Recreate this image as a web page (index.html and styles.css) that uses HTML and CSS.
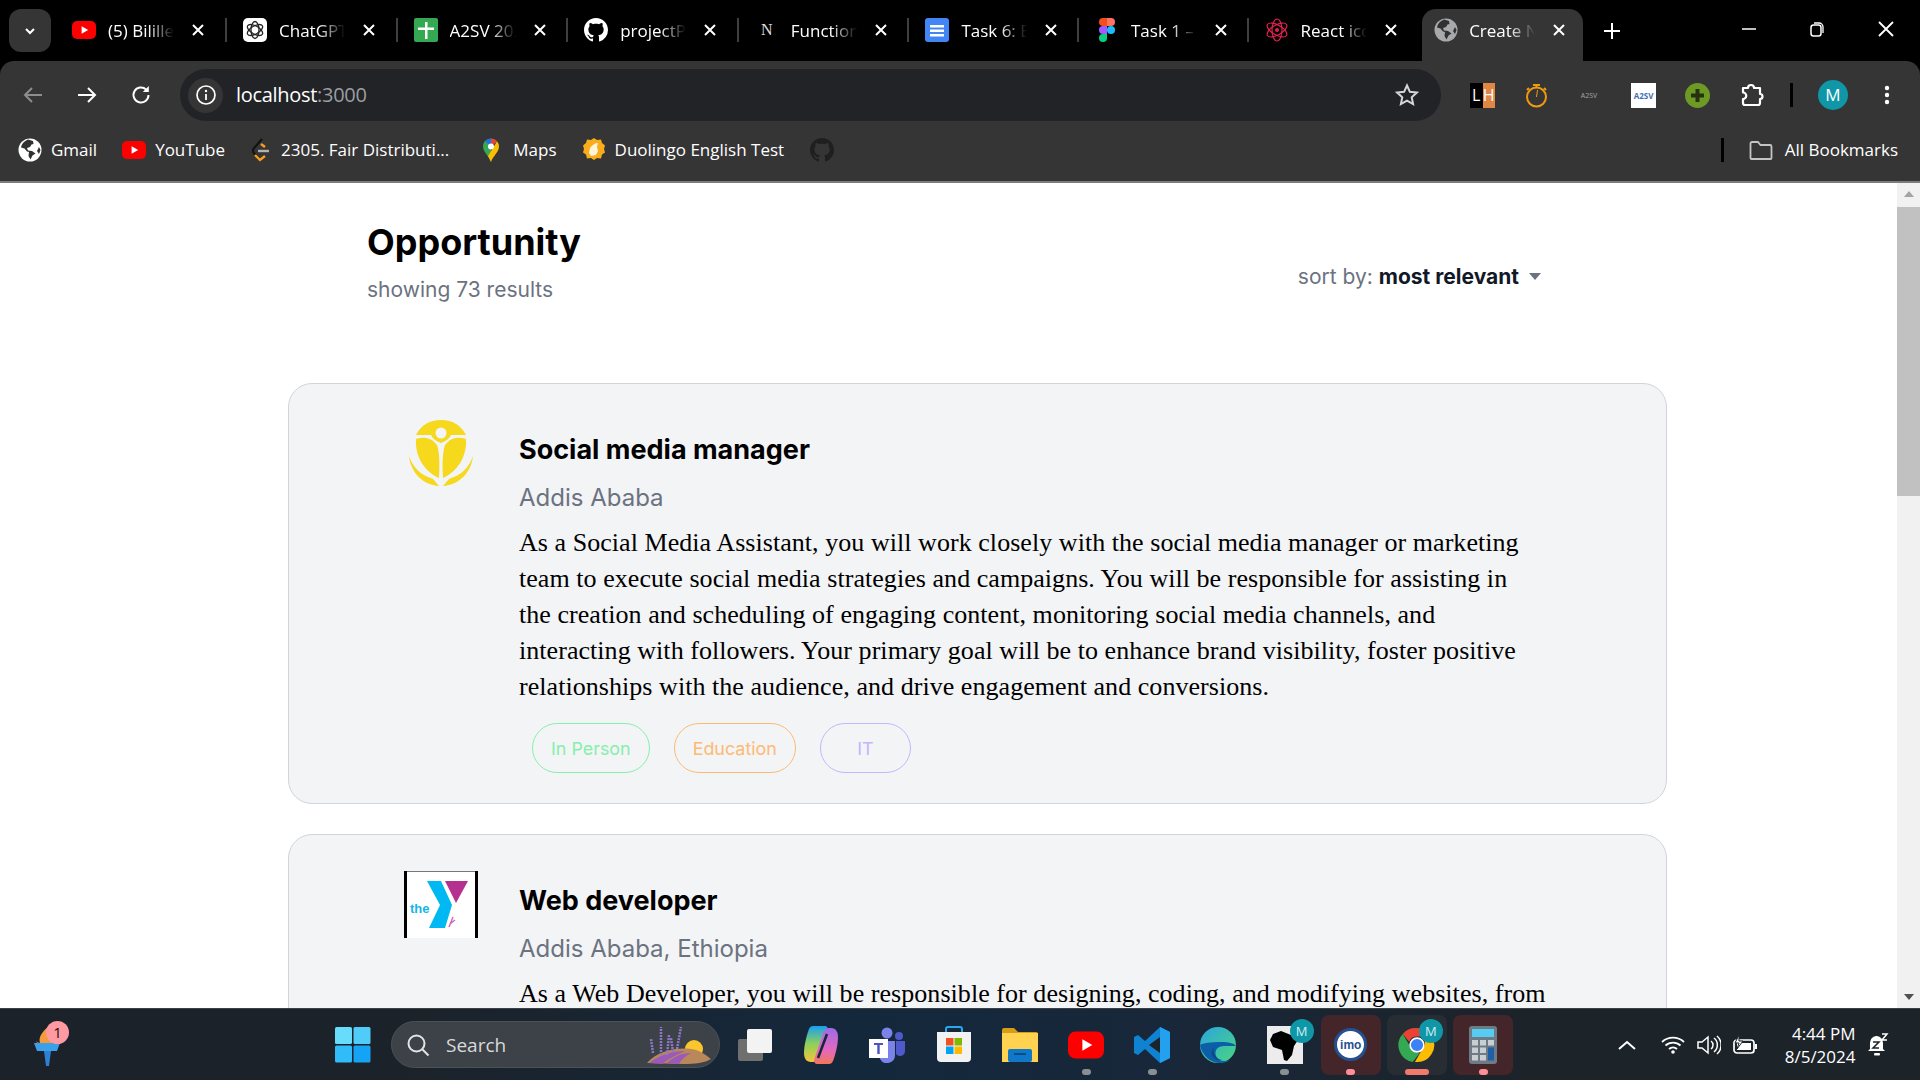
FILE: index.html
```html
<!DOCTYPE html>
<html lang="en">
<head>
<meta charset="utf-8">
<title>Opportunity</title>
<link rel="stylesheet" href="styles.css">
</head>
<body>
<svg class="sprite" aria-hidden="true">
  <defs>
    <symbol id="i-close" viewBox="0 0 14 14"><path d="M2 2l10 10M12 2L2 12" stroke="#fff" stroke-width="2" fill="none"/></symbol>
    <symbol id="i-yt" viewBox="0 0 24 24"><rect x="0" y="3" width="24" height="18" rx="5" fill="#f00"/><path d="M9.6 8.2l6.6 3.8-6.6 3.8z" fill="#fff"/></symbol>
    <symbol id="i-globe" viewBox="0 0 24 24"><circle cx="12" cy="12" r="11.5" fill="currentColor"/><path d="M10 1.5C6 3 3.5 6 3 9.5l3.5 1 2.5 3 2 .5-.5 4 2 3.5 2-4 3-2-3.5-2.5-4-.5-1-2.5 3-1 1.500-2.500 2-.5L15 3z" fill="#2f3133"/><path d="M21 9l1.500 3-1.500 4-2-3z" fill="#2f3133"/></symbol>
    <symbol id="i-gh" viewBox="0 0 16 16"><path fill="currentColor" d="M8 0C3.58 0 0 3.58 0 8c0 3.54 2.29 6.53 5.47 7.59.4.07.55-.17.55-.38 0-.19-.01-.82-.01-1.49-2.01.37-2.53-.49-2.69-.94-.09-.23-.48-.94-.82-1.13-.28-.15-.68-.52-.01-.53.63-.01 1.08.58 1.23.82.72 1.21 1.87.87 2.33.66.07-.52.28-.87.51-1.07-1.78-.2-3.64-.89-3.64-3.95 0-.87.31-1.59.82-2.15-.08-.2-.36-1.02.08-2.12 0 0 .67-.21 2.2.82.64-.18 1.32-.27 2-.27.68 0 1.36.09 2 .27 1.53-1.04 2.2-.82 2.2-.82.44 1.1.16 1.92.08 2.12.51.56.82 1.27.82 2.15 0 3.07-1.87 3.75-3.65 3.95.29.25.54.73.54 1.48 0 1.07-.01 1.93-.01 2.2 0 .21.15.46.55.38A8.013 8.013 0 0016 8c0-4.42-3.58-8-8-8z"/></symbol>
  </defs>
</svg>

<header class="chrome">
  <div class="tabstrip">
    <button class="tab-menu"><svg width="14" height="14" viewBox="0 0 14 14"><path d="M3 5l4 4 4-4" stroke="#fff" stroke-width="2" fill="none"/></svg></button>
    <div class="tab tab-first sep">
      <svg class="fav" viewBox="0 0 24 24"><use href="#i-yt"/></svg>
      <span class="tab-title">(5) Bililleee</span>
      <svg class="tab-x"><use href="#i-close"/></svg>
    </div>
    <div class="tab sep">
      <svg class="fav" viewBox="0 0 24 24"><rect width="24" height="24" rx="5" fill="#fff"/><g fill="none" stroke="#222" stroke-width="1.3"><ellipse cx="12" cy="12" rx="4" ry="8.500"/><ellipse cx="12" cy="12" rx="4" ry="8.500" transform="rotate(60 12 12)"/><ellipse cx="12" cy="12" rx="4" ry="8.500" transform="rotate(120 12 12)"/></g></svg>
      <span class="tab-title">ChatGPT</span>
      <svg class="tab-x"><use href="#i-close"/></svg>
    </div>
    <div class="tab sep">
      <svg class="fav" viewBox="0 0 24 24"><rect width="24" height="24" rx="2" fill="#34a853"/><path d="M11 4h2.500v5.500H20V12h-6.500v9H11v-9H4V9.500h7z" fill="#fff"/></svg>
      <span class="tab-title">A2SV 2024</span>
      <svg class="tab-x"><use href="#i-close"/></svg>
    </div>
    <div class="tab sep">
      <svg class="fav fav-white" viewBox="0 0 16 16"><use href="#i-gh"/></svg>
      <span class="tab-title">projectPhase</span>
      <svg class="tab-x"><use href="#i-close"/></svg>
    </div>
    <div class="tab sep">
      <span class="fav fav-n">N</span>
      <span class="tab-title">Functions</span>
      <svg class="tab-x"><use href="#i-close"/></svg>
    </div>
    <div class="tab tab-narrow sep">
      <svg class="fav" viewBox="0 0 24 24"><rect width="24" height="24" rx="3" fill="#4285f4"/><path d="M5 7h14v2.600H5zM5 11.500h14v2.600H5zM5 16h14v2.600H5z" fill="#fff"/></svg>
      <span class="tab-title">Task 6: Exam</span>
      <svg class="tab-x"><use href="#i-close"/></svg>
    </div>
    <div class="tab tab-narrow sep">
      <svg class="fav" viewBox="0 0 24 24"><path d="M12 0h4a4 4 0 010 8h-4z" fill="#ff7262"/><path d="M12 0H8a4 4 0 000 8h4z" fill="#f24e1e"/><path d="M12 8H8a4 4 0 000 8h4z" fill="#a259ff"/><circle cx="16" cy="12" r="4" fill="#1abcfe"/><path d="M8 16h4v4a4 4 0 11-4-4z" fill="#0acf83"/></svg>
      <span class="tab-title">Task 1 – Design</span>
      <svg class="tab-x"><use href="#i-close"/></svg>
    </div>
    <div class="tab tab-narrow">
      <svg class="fav" viewBox="0 0 24 24"><g fill="none" stroke="#e0234e" stroke-width="1.200"><ellipse cx="12" cy="12" rx="5" ry="11"/><ellipse cx="12" cy="12" rx="5" ry="11" transform="rotate(60 12 12)"/><ellipse cx="12" cy="12" rx="5" ry="11" transform="rotate(120 12 12)"/></g><circle cx="12" cy="12" r="2" fill="#e0234e"/></svg>
      <span class="tab-title">React icons</span>
      <svg class="tab-x"><use href="#i-close"/></svg>
    </div>
    <div class="tab tab-active">
      <svg class="fav fav-globe" viewBox="0 0 24 24"><use href="#i-globe"/></svg>
      <span class="tab-title">Create Next</span>
      <svg class="tab-x"><use href="#i-close"/></svg>
    </div>
    <svg class="new-tab" width="18" height="18" viewBox="0 0 18 18"><path d="M9 1v16M1 9h16" stroke="#fff" stroke-width="2"/></svg>
    <div class="win-ctrls">
      <svg width="16" height="16" viewBox="0 0 16 16"><path d="M1 8h14" stroke="#fff" stroke-width="1.500"/></svg>
      <svg width="16" height="16" viewBox="0 0 16 16"><rect x="2" y="4" width="10" height="11" rx="2.500" fill="none" stroke="#fff" stroke-width="1.500"/><path d="M5 2h5a4 4 0 014 4v6" fill="none" stroke="#fff" stroke-width="1.300"/></svg>
      <svg width="18" height="18" viewBox="0 0 18 18"><path d="M2 2l14 14M16 2L2 16" stroke="#fff" stroke-width="1.800"/></svg>
    </div>
  </div>

  <div class="toolbar">
    <div class="nav-btns">
      <svg width="22" height="22" viewBox="0 0 22 22"><path d="M20 11H3M10 4l-7 7 7 7" stroke="#8b8d8f" stroke-width="2" fill="none"/></svg>
      <svg width="22" height="22" viewBox="0 0 22 22"><path d="M2 11h17M12 4l7 7-7 7" stroke="#fff" stroke-width="2" fill="none"/></svg>
      <svg width="22" height="22" viewBox="0 0 22 22"><path d="M18.500 11a7.500 7.500 0 11-2.300-5.400" stroke="#fff" stroke-width="2" fill="none"/><path d="M18.800 2v6h-6z" fill="#fff"/></svg>
    </div>
    <div class="omnibox">
      <span class="site-info"><svg width="22" height="22" viewBox="0 0 22 22"><circle cx="11" cy="11" r="9" fill="none" stroke="#fff" stroke-width="1.700"/><path d="M11 10v6" stroke="#fff" stroke-width="1.800"/><circle cx="11" cy="7" r="1.200" fill="#fff"/></svg></span>
      <span class="url">localhost<span class="url-dim">:3000</span></span>
      <svg class="star" width="24" height="24" viewBox="0 0 24 24"><path d="M12 2.500l2.900 6.300 6.900.8-5.100 4.700 1.400 6.800-6.100-3.400-6.100 3.400 1.400-6.800-5.100-4.700 6.900-.8z" fill="none" stroke="#d5d5d5" stroke-width="2"/></svg>
    </div>
    <div class="extensions">
      <div class="ext-lh"><span class="lh-l">L</span><span class="lh-h">H</span></div>
      <svg class="ext ext-timer" width="25" height="25" viewBox="0 0 25 25"><circle cx="12.500" cy="14" r="9.500" fill="none" stroke="#f09a0f" stroke-width="2"/><path d="M9 2h7M12.500 2v3M20 5l2 2M5 5L3 7" stroke="#f09a0f" stroke-width="2" fill="none"/><path d="M12.500 14l1-7" stroke="#f09a0f" stroke-width="1"/></svg>
      <span class="ext ext-a2sv">A2SV</span>
      <span class="ext ext-white">A2SV</span>
      <svg class="ext ext-plus" width="25" height="25" viewBox="0 0 25 25"><circle cx="12.500" cy="12.500" r="12.500" fill="#6c9a24"/><path d="M10.500 6h4v4.500H19v4h-4.500V19h-4v-4.500H6v-4h4.500z" fill="#25340f"/></svg>
      <svg class="ext ext-puzzle" width="25" height="25" viewBox="0 0 25 25"><path d="M3 6h5a3 3 0 016 0h6v6a2.500 2.500 0 010 5v4a2 2 0 01-2 2H5a2 2 0 01-2-2v-4a3 3 0 000-6.500z" transform="translate(0 -1)" fill="none" stroke="#fff" stroke-width="2.200" stroke-linejoin="round"/></svg>
      <span class="tool-sep"></span>
      <span class="avatar">M</span>
      <svg class="kebab" width="6" height="22" viewBox="0 0 6 22"><circle cx="3" cy="4" r="2.200" fill="#fff"/><circle cx="3" cy="11" r="2.200" fill="#fff"/><circle cx="3" cy="18" r="2.200" fill="#fff"/></svg>
    </div>
  </div>

  <nav class="bookmarks">
    <a class="bm bm-gmail"><svg class="bm-ico bm-white" viewBox="0 0 24 24"><use href="#i-globe"/></svg>Gmail</a>
    <a class="bm bm-yt"><svg class="bm-ico" viewBox="0 0 24 24"><use href="#i-yt"/></svg>YouTube</a>
    <a class="bm bm-lc"><svg class="bm-ico" viewBox="0 0 24 24"><path d="M14 1L6 10a4 4 0 000 5l5 6" fill="none" stroke="#111" stroke-width="2"/><path d="M13 6l4 3M7 17l5 5 5-4" fill="none" stroke="#f89f1b" stroke-width="2.400"/><path d="M10 13h11" stroke="#b3b3b3" stroke-width="2.400"/></svg>2305. Fair Distributi...</a>
    <a class="bm bm-maps"><svg class="bm-ico bm-pin" viewBox="0 0 18 24"><path d="M9 24C7 18 1 14 1 8.500a8 8 0 0114-5.300L9 8.500z" fill="#34a853"/><path d="M15 3.200A8 8 0 0117 8.500C17 14 11 18 9 24l-3-6z" fill="#fbbc04"/><path d="M3 3.200A8 8 0 019 .5v8z" fill="#1a73e8"/><path d="M9 .5a8 8 0 016 2.700L9 8.500z" fill="#ea4335"/><circle cx="9" cy="8.500" r="3" fill="#fff"/></svg>Maps</a>
    <a class="bm bm-duo"><svg class="bm-ico" viewBox="0 0 24 24"><path d="M12 0l3 2 4-.5 1 3.500 3 2.500-1 3.500 1 3.500-3 2-1 4-4-.500-3 2-3-2-4 .500-1-4-3-2 1-3.500L1 7.500 4 5l1-3.500 4 .5z" fill="#f9ad1b"/><path d="M8 10c2-3 5-5 8-5l-1 4 1 4-2 4-5 1-2-3z" fill="#fff3d9"/></svg>Duolingo English Test</a>
    <a class="bm bm-gh"><svg class="bm-ico bm-dark" viewBox="0 0 16 16"><use href="#i-gh"/></svg></a>
    <span class="bm-sep"></span>
    <a class="bm bm-all"><svg class="bm-ico" viewBox="0 0 24 24"><path d="M1.500 5.500a1.500 1.500 0 011.500-1.500h6l2.500 3H21a1.500 1.500 0 011.500 1.500V20a1 1 0 01-1 1h-19a1 1 0 01-1-1z" fill="none" stroke="#c4c4c4" stroke-width="1.800"/></svg>All Bookmarks</a>
  </nav>
</header>

<div class="viewport">
  <main class="page">
    <div class="page-head">
      <div>
        <h1 class="page-title">Opportunity</h1>
        <p class="page-count">showing 73 results</p>
      </div>
      <div class="sort">sort by: <b>most relevant</b><span class="caret"></span></div>
    </div>

    <article class="card">
      <div class="card-logo">
        <svg width="66" height="66" viewBox="0 0 66 66"><path d="M33 0C22 0 13 5 8 15h15c2 4 5 6 10 8 5-2 8-4 10-8h15C53 5 44 0 33 0z" fill="#f6d81d"/><circle cx="33" cy="13" r="5.500" fill="#f3f4f6"/><path d="M8 19c8-3 16-1 21 6 2 5 3 16 2 33C14 50 7 34 8 19zM58 19c-8-3-16-1-21 6-2 5-3 16-2 33 17-8 24-24 23-39z" fill="#f6d81d"/><path d="M1 36c4 12 12 19 24 23l6 7C15 65 3 53 1 36zM65 36c-4 12-12 19-24 23l-6 7c16-1 28-13 30-30z" fill="#f6d81d"/></svg>
      </div>
      <div class="card-body">
        <h2 class="card-title">Social media manager</h2>
        <p class="card-loc">Addis Ababa</p>
        <p class="card-desc">As a Social Media Assistant, you will work closely with the social media manager or marketing<br>team to execute social media strategies and campaigns. You will be responsible for assisting in<br>the creation and scheduling of engaging content, monitoring social media channels, and<br>interacting with followers. Your primary goal will be to enhance brand visibility, foster positive<br>relationships with the audience, and drive engagement and conversions.</p>
        <div class="tags">
          <span class="tag tag-green">In Person</span>
          <span class="tag tag-orange">Education</span>
          <span class="tag tag-purple">IT</span>
        </div>
      </div>
    </article>

    <article class="card">
      <div class="card-logo">
        <svg class="ymca" width="74" height="67" viewBox="0 0 74 67"><rect width="74" height="67" fill="#fff"/><rect width="74" height="1" fill="#777"/><rect width="3" height="67" fill="#000"/><rect x="71" width="3" height="67" fill="#000"/><path d="M23 10h14l11 24-7 23H25l11-23z" fill="#00b9f2"/><path d="M41 10h23L52 32z" fill="#b5318f"/><path d="M49 46l-4 10M51 49l-5 4" stroke="#d36ab4" stroke-width="1.500"/><text x="6" y="42" class="ymca-the">the</text></svg>
      </div>
      <div class="card-body">
        <h2 class="card-title">Web developer</h2>
        <p class="card-loc">Addis Ababa, Ethiopia</p>
        <p class="card-desc">As a Web Developer, you will be responsible for designing, coding, and modifying websites, from<br>layout to function, according to a client's specifications.</p>
      </div>
    </article>
  </main>
  <div class="scrollbar">
    <svg class="sb-arrow" width="10" height="6" viewBox="0 0 10 6"><path d="M5 0l5 6H0z" fill="#a3a3a3"/></svg>
    <div class="sb-track"><div class="sb-thumb"></div></div>
    <svg class="sb-arrow" width="10" height="6" viewBox="0 0 10 6"><path d="M0 0h10L5 6z" fill="#505050"/></svg>
  </div>
</div>

<footer class="taskbar">
  <div class="tb-torch">
    <svg width="28" height="44" viewBox="0 0 28 44"><path d="M6 20C4 14 9 8 14 4c0 4 6 6 6 16z" fill="#f59a3d"/><path d="M2 18c3 3 8 2 10 2H3z" fill="#e9592c"/><path d="M0 20h26l-3 8H3z" fill="#3aa0ea"/><path d="M10 28h7l-2 15h-3z" fill="#2e7fd6"/></svg>
    <span class="torch-badge">1</span>
  </div>
  <svg class="tb-win" width="36" height="36" viewBox="0 0 36 36"><rect width="17" height="17" rx="1.500" fill="#67dcfb"/><rect x="18.500" width="17" height="17" rx="1.500" fill="#4fcdf8"/><rect y="18.500" width="17" height="17" rx="1.500" fill="#2fbcf8"/><rect x="18.500" y="18.500" width="17" height="17" rx="1.500" fill="#14a3f5"/></svg>
  <div class="tb-search">
    <svg width="24" height="24" viewBox="0 0 24 24"><circle cx="10.500" cy="10.500" r="8" fill="none" stroke="#e3e4e5" stroke-width="2"/><path d="M16.500 16.500l6 6" stroke="#e3e4e5" stroke-width="2"/></svg>
    <span class="tb-search-text">Search</span>
    <svg class="tb-art" width="66" height="40" viewBox="0 0 66 40"><circle cx="49" cy="24" r="9" fill="#fbc52d"/><path d="M2 38c10-12 30-16 44-14 8 1 14 5 20 10-6 4-16 5-28 5z" fill="#b9885a"/><path d="M4 38c10-8 24-12 36-12-8 4-18 8-22 13z" fill="#9a5ab8"/><path d="M22 38c6-6 14-10 24-10-6 3-10 7-12 11z" fill="#9a5ab8"/><g stroke="#8f77c9" stroke-width="2.500" stroke-dasharray="2 1" fill="none"><path d="M8 28L6 14M16 30V2M22 30l2-20M32 24l4-22M28 27l-2-14"/></g></svg>
  </div>
  <div class="tb-apps">
    <div class="tb-app"><svg width="36" height="36" viewBox="0 0 36 36"><rect x="1" y="12" width="25" height="22" rx="2" fill="#6f6f6f"/><rect x="10" y="2" width="25" height="24" rx="2" fill="#f3f3f3"/></svg></div>
    <div class="tb-app"><svg width="36" height="40" viewBox="0 0 36 40"><defs><linearGradient id="cp1" x1="0" y1="0" x2="0" y2="1"><stop offset="0" stop-color="#1a9ff0"/><stop offset=".5" stop-color="#8ed15a"/><stop offset="1" stop-color="#f5c33b"/></linearGradient><linearGradient id="cp2" x1="0" y1="0" x2="0" y2="1"><stop offset="0" stop-color="#9c6be8"/><stop offset=".6" stop-color="#e269bf"/><stop offset="1" stop-color="#f2765a"/></linearGradient></defs><path d="M10 1h12c2 0 3 2 3 4l-9 27c-1 3-3 5-6 5H8c-5 0-7-4-7-9C1 20 4 9 6 4c1-2 2-3 4-3z" fill="url(#cp1)"/><path d="M26 39H14c-2 0-3-2-3-4l9-27c1-3 3-5 6-5h2c5 0 7 4 7 9 0 8-3 19-5 24-1 2-2 3-4 3z" fill="url(#cp2)"/><path d="M24 9l-9 24" stroke="#17263a" stroke-width="2.500"/></svg></div>
    <div class="tb-app"><svg width="36" height="36" viewBox="0 0 36 36"><circle cx="18" cy="6" r="5.500" fill="#7b83eb"/><circle cx="30" cy="9" r="4" fill="#5059c9"/><path d="M11 14h15v14a8 8 0 01-15 4z" fill="#7b83eb"/><path d="M27 14h9v10a5 5 0 01-9 3z" fill="#5059c9"/><rect y="12" width="19" height="19" fill="#fff"/><path d="M5 16h9v2h-3.300v9H8.300v-9H5z" fill="#4b53bc"/></svg></div>
    <div class="tb-app"><svg width="36" height="37" viewBox="0 0 36 37"><path d="M10 7V3a2 2 0 012-2h12a2 2 0 012 2v4" fill="none" stroke="#28a8ea" stroke-width="2"/><path d="M1 6h34v26a4 4 0 01-4 4H5a4 4 0 01-4-4z" fill="#f2f2f2"/><rect x="10" y="12" width="7.500" height="7.500" fill="#f25022"/><rect x="18.500" y="12" width="7.500" height="7.500" fill="#7fba00"/><rect x="10" y="20.500" width="7.500" height="7.500" fill="#00a4ef"/><rect x="18.500" y="20.500" width="7.500" height="7.500" fill="#ffb900"/></svg></div>
    <div class="tb-app"><svg width="36" height="34" viewBox="0 0 36 34"><path d="M0 2a2 2 0 012-2h10l4 4h18a2 2 0 012 2v6H0z" fill="#d69e16"/><path d="M0 5h36v29H0z" fill="#ffd250"/><rect x="6" y="21" width="24" height="13" rx="2" fill="#0f78c8"/><path d="M12 26h12" stroke="#0a4d85" stroke-width="2"/></svg></div>
    <div class="tb-app"><svg width="36" height="36" viewBox="0 0 24 24"><use href="#i-yt"/></svg><i class="tb-dot"></i></div>
    <div class="tb-app"><svg width="36" height="36" viewBox="0 0 36 36"><path d="M26 0l10 5v26l-10 5L11 22l-7 6-4-2V10l4-2 7 6z" fill="#0f82d1"/><path d="M26 0l10 5v26l-10 5z" fill="#23a0ee"/><path d="M26 10L15 18l11 8z" fill="#1c2329"/></svg><i class="tb-dot"></i></div>
    <div class="tb-app"><svg width="36" height="36" viewBox="0 0 36 36"><defs><linearGradient id="ed1" x1="0" y1="0" x2="1" y2="1"><stop offset="0" stop-color="#2ca5e0"/><stop offset="1" stop-color="#49d67d"/></linearGradient></defs><circle cx="18" cy="18" r="18" fill="url(#ed1)"/><path d="M0 18C2 28 10 36 20 36c4 0 8-1 10-3-6 2-12 1-14-4-2-6 2-10 8-10h12c-2-3-8-4-14-4C10 15 3 16 0 18z" fill="#0c5ea8"/><path d="M14 20c-2 6 2 12 8 13-8 1-14-6-8-13z" fill="#114a82"/></svg></div>
    <div class="tb-app"><div class="africa"><svg width="36" height="38" viewBox="0 0 36 38"><path d="M6 8l8-3 10 4 7 5-4 6-2 9-5 6-3-1-2-10-9-3-3-7z" fill="#000"/></svg></div><span class="app-badge">M</span><i class="tb-dot"></i></div>
    <div class="tb-app tb-app-warn"><div class="imo"><span class="imo-text">imo</span></div><i class="tb-dot tb-dot-pink"></i></div>
    <div class="tb-app tb-app-active"><svg width="38" height="38" viewBox="0 0 36 36"><path d="M18 2a16 16 0 0113.900 8H18a8 8 0 00-7.500 5L4.500 7.500A16 16 0 0118 2z" fill="#ea4335"/><path d="M4.500 7.500l7 12a8 8 0 009 6L14 34A16 16 0 014.500 7.500z" fill="#34a853"/><path d="M32 10a16 16 0 01-16 24l7-12a8 8 0 000-12z" fill="#fbbc04"/><circle cx="18" cy="18" r="6.500" fill="#3b82f6" stroke="#fff" stroke-width="1.500"/></svg><span class="app-badge">M</span><i class="tb-dot tb-dot-wide"></i></div>
    <div class="tb-app tb-app-warn"><svg width="28" height="38" viewBox="0 0 28 38"><rect width="28" height="38" rx="3" fill="#6e7a85"/><rect x="3" y="3" width="22" height="8" fill="#56ccf2"/><g fill="#c9ced3"><rect x="3" y="14" width="6" height="5.500"/><rect x="11" y="14" width="6" height="5.500"/><rect x="19" y="14" width="6" height="5.500"/><rect x="3" y="21.500" width="6" height="5.500"/><rect x="11" y="21.500" width="6" height="5.500"/><rect x="3" y="29" width="6" height="5.500"/><rect x="11" y="29" width="6" height="5.500"/></g><rect x="19" y="21.500" width="6" height="13" fill="#1f5fa8"/></svg><i class="tb-dot tb-dot-pink"></i></div>
  </div>
  <div class="tray">
    <svg width="18" height="10" viewBox="0 0 18 10"><path d="M1 9l8-7 8 7" fill="none" stroke="#fff" stroke-width="2"/></svg>
    <svg class="tray-wifi" width="24" height="18" viewBox="0 0 24 18"><g fill="none" stroke="#fff" stroke-width="1.800"><path d="M1 6a16 16 0 0122 0M4.500 9.500a11 11 0 0115 0M8 13a6 6 0 018 0"/></g><circle cx="12" cy="16" r="1.800" fill="#fff"/></svg>
    <svg class="tray-sound" width="24" height="20" viewBox="0 0 24 20"><path d="M1 7h4l6-5v16l-6-5H1z" fill="none" stroke="#fff" stroke-width="1.500"/><path d="M14 6a5 5 0 010 8M17 3a9 9 0 010 14M20 1a12 12 0 010 18" fill="none" stroke="#fff" stroke-width="1.500"/></svg>
    <svg class="tray-batt" width="24" height="20" viewBox="0 0 24 20"><rect x="1" y="5" width="20" height="13" rx="3" fill="none" stroke="#fff" stroke-width="1.700"/><rect x="4" y="8" width="14" height="7" fill="#fff"/><rect x="22" y="9" width="2" height="5" fill="#fff"/><path d="M6 0L2 8h4l-2 6 6-8H6z" fill="#fff" stroke="#1c2329"/></svg>
    <div class="clock"><span>4:44 PM</span><span>8/5/2024</span></div>
    <svg class="tray-bell" width="22" height="24" viewBox="0 0 22 24"><path d="M9 3a7 7 0 00-6 7v6l-2 2h17l-2-2v-6a7 7 0 00-6-7z" fill="#fff"/><rect x="7" y="20" width="6" height="2.500" rx="1" fill="#fff"/><path d="M6 9h6l-6 6h6" fill="none" stroke="#1c2329" stroke-width="1.500"/><path d="M15 1h5l-5 6h5" fill="none" stroke="#fff" stroke-width="1.500"/></svg>
  </div>
</footer>
</body>
</html>
```
FILE: styles.css
```css
* { box-sizing: border-box; }
html, body { height: 100%; margin: 0; }
body {
  display: flex;
  flex-direction: column;
  height: 1080px;
  overflow: hidden;
  background: #fff;
  font-family: Inter, "Liberation Sans", sans-serif;
}
.sprite { width: 0; height: 0; position: absolute; }

/* browser chrome */
.chrome { flex: none; background: #000; color: #fff; font-family: "Open Sans", "Noto Sans", sans-serif; }
.tabstrip { height: 61px; display: flex; align-items: flex-end; padding-left: 9px; }
.tab-menu {
  width: 42px; height: 43px; margin-bottom: 9px; margin-right: 4px;
  background: #353535; border: 0; border-radius: 12px;
  display: flex; align-items: center; justify-content: center; padding: 0;
}
.tab {
  flex: none; position: relative; width: 170.6px; height: 52px;
  display: flex; align-items: center; padding: 0 0 10px 16px; font-size: 17px;
}
.tab-first { width: 172px; padding-left: 17px; }
.tab-narrow { width: 169.6px; }
.sep::after {
  content: ""; position: absolute; right: 0; top: 9px; width: 2px; height: 24px; background: #3f3f3f;
}
.fav { width: 24px; height: 24px; flex: none; }
.fav-white { color: #fff; }
.fav-n { font-family: "Liberation Serif", serif; font-size: 16px; text-align: center; line-height: 24px; color: #ddd; }
.fav-globe { color: #a7a9ab; }
.tab-title {
  margin-left: 12px; width: 66px; flex: none; white-space: nowrap; overflow: hidden;
  -webkit-mask-image: linear-gradient(90deg, #000 60%, transparent 100%);
  mask-image: linear-gradient(90deg, #000 60%, transparent 100%);
}
.tab-x { width: 14px; height: 14px; flex: none; margin-left: 17px; }
.tab-active {
  width: 160.5px; height: 52px; background: #353535; border-radius: 14px 14px 0 0;
  padding-left: 12px; margin-left: 4px;
}
.tab-active .tab-title { margin-left: 11px; width: 66px; }
.tab-active .tab-x { margin-left: 17px; }
.new-tab { margin: 0 0 21px 20px; flex: none; }
.win-ctrls { margin-left: auto; display: flex; align-items: center; gap: 52px; padding: 0 25px 23px 0; }

.toolbar {
  height: 60px; background: #353535; border-radius: 14px 14px 0 0;
  display: flex; align-items: center; padding: 8px 0 0 22px;
}
.nav-btns { display: flex; gap: 32px; width: 158px; flex: none; }
.omnibox {
  width: 1261px; height: 52px; background: #212327; border-radius: 26px;
  display: flex; align-items: center; padding: 0 22px 0 8px; flex: none;
}
.site-info {
  width: 35px; height: 35px; border-radius: 50%; background: #353535;
  display: flex; align-items: center; justify-content: center; flex: none;
}
.url { margin-left: 13px; padding-bottom: 2px; font-size: 20px; font-family: "Open Sans", sans-serif; letter-spacing: -.3px; }
.url-dim { color: #9c9ea1; }
.star { margin-left: auto; }
.extensions { display: flex; align-items: center; flex: 1; padding-left: 29px; }
.ext { flex: none; }
.ext-lh { display: flex; width: 25px; height: 25px; font-size: 16px; line-height: 25px; text-align: center; flex: none; }
.lh-l { flex: 1; background: #000; }
.lh-h { flex: 1; background: #e08744; }
.ext-timer { margin-left: 29px; }
.ext-a2sv { margin-left: 28px; width: 24px; font-size: 7px; color: #a4a4a4; text-align: center; }
.ext-white {
  margin-left: 30px; width: 25px; height: 25px; background: #fff; color: #3f6fb5;
  font-size: 8px; line-height: 25px; text-align: center; font-weight: 700;
}
.ext-plus { margin-left: 29px; }
.ext-puzzle { margin-left: 30px; }
.tool-sep { width: 3px; height: 24px; background: #000; margin-left: 25px; flex: none; }
.avatar {
  width: 30px; height: 30px; margin-left: 25px; border-radius: 50%; background: #0f97a8;
  text-align: center; line-height: 30px; font-size: 17px; flex: none;
}
.kebab { margin-left: 36px; flex: none; }

.bookmarks {
  height: 62px; background: #353535; border-bottom: 2px solid #7c7c7c;
  display: flex; align-items: center; padding: 0 22px 3px 0; font-size: 17px;
}
.bm { display: flex; align-items: center; white-space: nowrap; color: #fff; flex: none; }
.bm-ico { width: 24px; height: 24px; flex: none; margin-right: 9px; }
.bm-white { color: #fff; }
.bm-dark { color: #1f1f1f; margin-right: 0; }
.bm-pin { width: 18px; margin-right: 13px; }
.bm-gmail { margin-left: 18px; }
.bm-yt { margin-left: 25px; }
.bm-lc { margin-left: 23px; }
.bm-maps { margin-left: 33px; }
.bm-duo { margin-left: 25px; }
.bm-gh { margin-left: 26px; }
.bm-sep { margin-left: auto; width: 3px; height: 24px; background: #000; flex: none; }
.bm-all { margin-left: 25px; }
.bm-all .bm-ico { margin-right: 12px; }

/* page */
.viewport { flex: 1; min-height: 0; display: flex; background: #fff; }
.page { flex: 1; min-width: 0; overflow: hidden; padding: 39px 230px 0 288px; }
.page-head {
  display: flex; justify-content: space-between; align-items: center;
  padding: 0 126px 0 79px; height: 82px; margin-bottom: 79px;
}
.page-title { margin: 0; font-size: 36px; line-height: 40px; font-weight: 700; color: #000; }
.page-count { margin: 14px 0 0; font-size: 21px; line-height: 28px; color: #6b7280; }
.sort { font-size: 21px; color: #6b7280; white-space: nowrap; display: flex; align-items: center; gap: 6px; margin-top: 26px; }
.sort b { color: #111827; font-weight: 700; }
.caret {
  width: 0; height: 0; margin-left: 4px;
  border-left: 6.500px solid transparent; border-right: 6.500px solid transparent; border-top: 7px solid #6b7280;
}
.card {
  display: flex; gap: 33px; width: 1379px; margin-bottom: 30px;
  padding: 36px 90px 30px 107px;
  background: #f3f4f6; border: 1px solid #d1d5db; border-radius: 24px;
}
.card-logo { width: 90px; flex: none; display: flex; justify-content: center; align-items: flex-start; }
.card-body { flex: 1; min-width: 0; padding-top: 12px; }
.card-title { margin: 0; font-size: 27px; line-height: 36px; font-weight: 700; color: #000; }
.card-loc { margin: 14px 0 0; font-size: 24px; line-height: 32px; color: #6b7280; }
.card-desc { margin: 11px 0 0; font: 26px/36px "Liberation Serif", serif; letter-spacing: .05px; color: #000; }
.tags { display: flex; gap: 24px; margin: 18px 0 0 13px; }
.tag {
  height: 50px; min-width: 91px; padding: 0 18px; border: 1.500px solid; border-radius: 25px;
  display: flex; align-items: center; justify-content: center; font-size: 17.9px;
}
.tag-green { color: #86efac; border-color: #86efac; }
.tag-orange { color: #fdba74; border-color: #fdba74; }
.tag-purple { color: #c4b5fd; border-color: #c4b5fd; }
.ymca { flex: none; }
.ymca-the { font: 700 13px "Liberation Sans", sans-serif; fill: #19b5e8; }

.scrollbar { width: 23px; flex: none; background: #f1f1f1; display: flex; flex-direction: column; align-items: center; padding: 8px 0; }
.sb-arrow { flex: none; }
.sb-track { flex: 1; width: 100%; padding-top: 10px; }
.sb-thumb { height: 289px; background: #c1c1c1; }

/* taskbar */
.taskbar {
  flex: none; height: 72px; display: flex; align-items: center; position: relative;
  border-top: 1px solid #3b4045; font-family: "Open Sans", "Noto Sans", sans-serif;
  background: linear-gradient(90deg, #1c2229 0, #1c2229 20%, #14283c 45%, #18273a 60%, #1c2329 80%, #1c2329 100%);
}
.tb-torch { position: relative; width: 28px; margin-left: 34px; flex: none; display: flex; }
.torch-badge {
  position: absolute; left: 12px; top: -2px; width: 23px; height: 23px; border-radius: 50%;
  background: #ff9aa2; color: #111; font-size: 15px; text-align: center; line-height: 23px;
}
.tb-win { margin-left: 273px; flex: none; }
.tb-search {
  width: 329px; height: 47px; margin-left: 20px; flex: none; border-radius: 24px;
  background: #3c4247; border: 1px solid #4c5156; display: flex; align-items: center; padding-left: 14px;
  color: #d8dadb; font-size: 19px; position: relative;
}
.tb-search-text { margin-left: 16px; }
.tb-art { margin-left: auto; margin-right: 8px; }
.tb-apps { display: flex; margin-left: 2px; flex: none; }
.tb-app {
  width: 66.2px; height: 60px; position: relative; display: flex; align-items: center; justify-content: center;
  border-radius: 8px;
}
.tb-app-warn { background: #44262a; width: 60px; margin: 0 3.1px; }
.tb-app-active { background: #272d33; width: 60px; margin: 0 3.1px; }
.tb-dot { position: absolute; bottom: 0; left: 50%; width: 9px; height: 6px; margin-left: -4.500px; border-radius: 3px; background: #8a8f93; }
.tb-dot-pink { background: #ff8f97; }
.tb-dot-wide { width: 24px; margin-left: -12px; background: #f2796c; }
.africa { width: 36px; height: 38px; background: #ececec; display: flex; }
.app-badge {
  position: absolute; right: 4px; top: 4px; width: 24px; height: 24px; border-radius: 50%;
  background: #0f97a8; color: #cfeef2; font-size: 13px; line-height: 24px; text-align: center;
}
.imo {
  width: 33px; height: 33px; border-radius: 50%; background: #fff; border: 3px solid #25508f;
  display: flex; align-items: center; justify-content: center;
}
.imo-text { font: 700 12px "Liberation Sans", sans-serif; color: #25508f; }
.tray { margin-left: auto; display: flex; align-items: center; padding-right: 31.5px; }
.tray-wifi { margin-left: 25px; }
.tray-sound { margin-left: 12px; }
.tray-batt { margin-left: 12px; }
.clock {
  display: flex; flex-direction: column; align-items: flex-end; margin-left: 28px;
  font-size: 17px; line-height: 23px; color: #fff;
}
.tray-bell { margin-left: 11px; }
```
